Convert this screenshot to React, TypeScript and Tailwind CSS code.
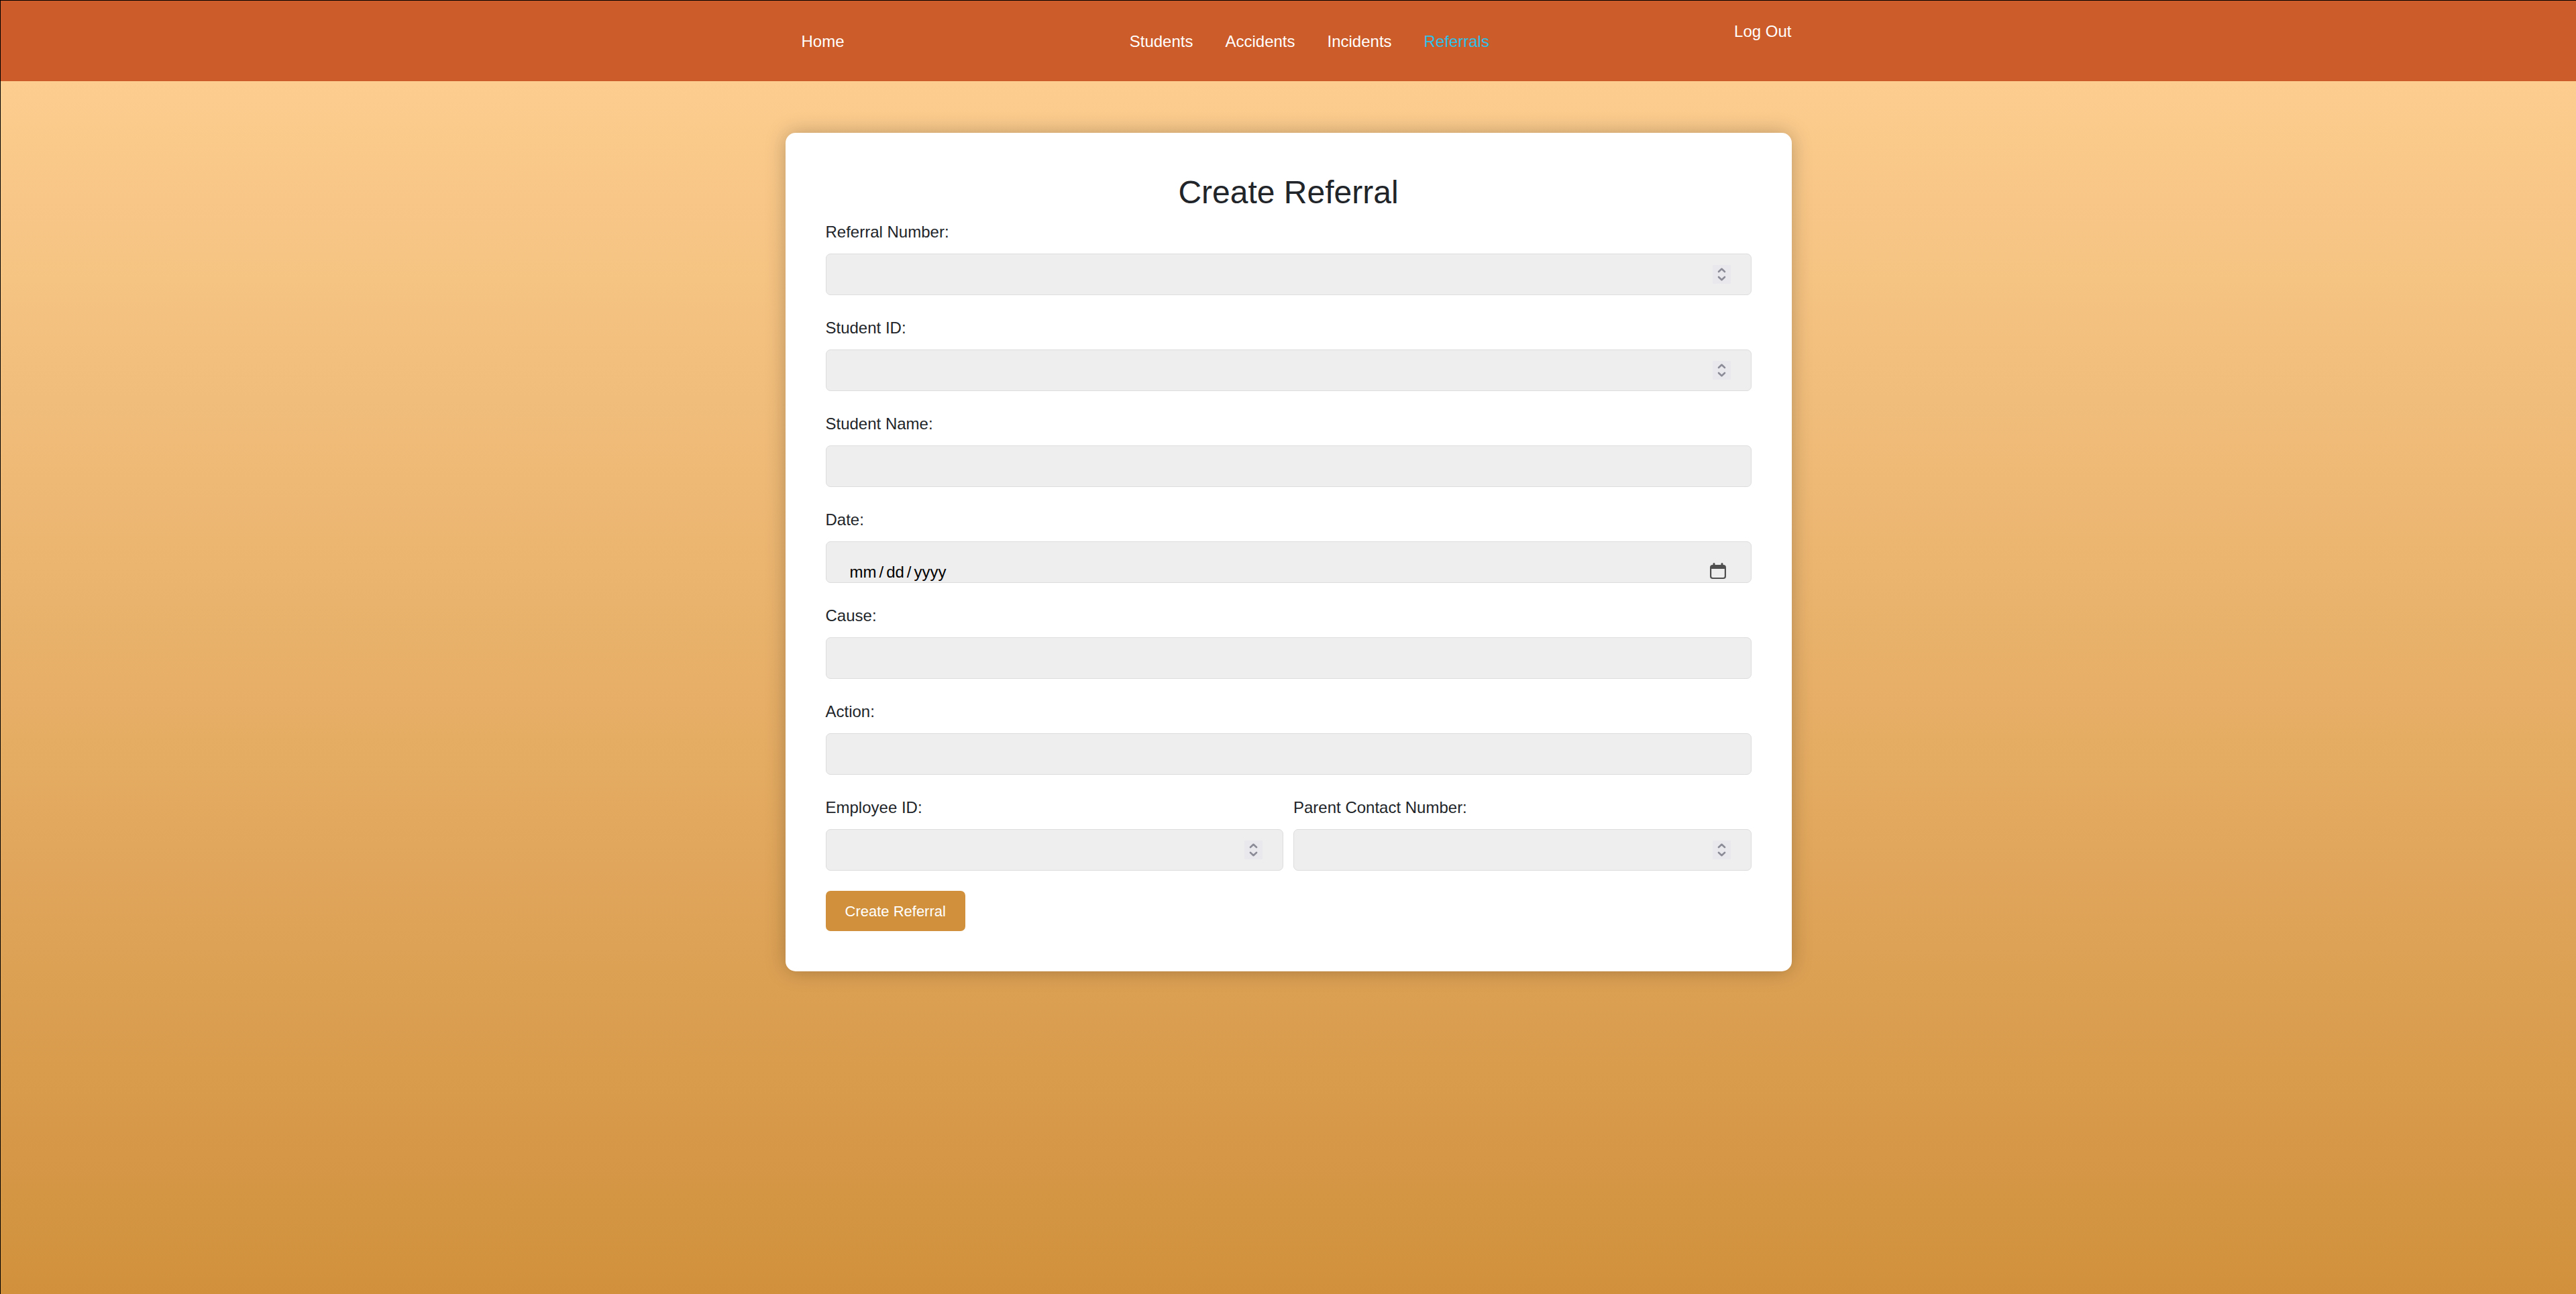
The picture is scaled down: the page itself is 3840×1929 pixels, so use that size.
import React from "react";

type FieldProps = {
  id: string;
  label: string;
  type?: "text" | "number" | "date";
};

function Stepper() {
  return (
    <span className="pointer-events-none absolute inset-y-0 right-[31px] flex items-center">
      <svg width="27" height="28" viewBox="0 0 27 28" aria-hidden="true">
        <rect width="27" height="28" fill="#e9e9ed" />
        <path
          d="M9 10 L13.5 5.8 L18 10 M9 18 L13.5 22.2 L18 18"
          fill="none"
          stroke="#8c8c99"
          strokeWidth="2.6"
          strokeLinecap="round"
          strokeLinejoin="round"
        />
      </svg>
    </span>
  );
}

function CalendarIcon() {
  return (
    <span className="pointer-events-none absolute inset-y-0 right-[38px] flex items-end pb-1.5">
      <svg width="24" height="24" viewBox="0 0 24 24" aria-hidden="true">
        <path
          fill="#4f4f50"
          fillRule="evenodd"
          d="M4.5 3V1.5a1.5 1.5 0 0 1 3 0V3h9V1.5a1.5 1.5 0 0 1 3 0V3H20a4 4 0 0 1 4 4v13a4 4 0 0 1-4 4H4a4 4 0 0 1-4-4V7a4 4 0 0 1 4-4zM2.2 9v11a2 2 0 0 0 2 2h15.6a2 2 0 0 0 2-2V9z"
        />
      </svg>
    </span>
  );
}

const inputBase =
  "block h-[62px] w-full rounded-[7px] border border-[#dddddd] bg-[#eeeeee] px-[34px] text-2xl text-black outline-none [appearance:textfield] [&::-webkit-inner-spin-button]:appearance-none";

const dateParts =
  "pt-[29px] [&::-webkit-datetime-edit-text]:px-[3px] [&::-webkit-datetime-edit-fields-wrapper]:p-0 [&::-webkit-calendar-picker-indicator]:opacity-0";

function Field({ id, label, type = "text" }: FieldProps) {
  return (
    <div className="min-w-0 flex-1">
      <label htmlFor={id} className="mb-3.5 block text-2xl leading-9">
        {label}
      </label>
      <div className="relative">
        <input
          id={id}
          name={id}
          type={type}
          className={type === "date" ? `${inputBase} ${dateParts}` : inputBase}
        />
        {type === "number" && <Stepper />}
        {type === "date" && <CalendarIcon />}
      </div>
    </div>
  );
}

const links = ["Students", "Accidents", "Incidents", "Referrals"];

export default function App() {
  return (
    <div className="min-h-screen border-t border-l border-black bg-linear-to-b from-[#ffd194] to-[#d1913c] font-['Liberation_Sans',Arial,sans-serif] text-[#212529]">
      <header className="bg-[#cc5c29] pt-7 pb-[26px]">
        <nav className="mx-auto flex max-w-[1500px] items-start justify-between text-2xl leading-9 text-white">
          <a href="#home" className="px-6 py-[15px]">
            Home
          </a>
          <ul className="flex gap-12 py-[15px] pr-6 pl-[60px]">
            {links.map((name) => (
              <li key={name}>
                <a
                  href={`#${name.toLowerCase()}`}
                  className={name === "Referrals" ? "text-[#2fc1ea]" : "text-white"}
                >
                  {name}
                </a>
              </li>
            ))}
          </ul>
          <a href="#logout">Log Out</a>
        </nav>
      </header>

      <main className="mx-auto mt-[77px] max-w-[1500px] rounded-[15px] bg-white p-[60px] shadow-[0_0_30px_rgba(0,0,0,0.25)]">
        <h1 className="mb-3 text-center text-5xl leading-[58px]">Create Referral</h1>
        <form onSubmit={(e: React.FormEvent) => e.preventDefault()}>
          <div className="flex flex-col gap-[31px]">
            <Field id="referral-number" label="Referral Number:" type="number" />
            <Field id="student-id" label="Student ID:" type="number" />
            <Field id="student-name" label="Student Name:" />
            <Field id="date" label="Date:" type="date" />
            <Field id="cause" label="Cause:" />
            <Field id="action" label="Action:" />
            <div className="flex gap-[15px]">
              <Field id="employee-id" label="Employee ID:" type="number" />
              <Field id="parent-contact" label="Parent Contact Number:" type="number" />
            </div>
          </div>
          <button
            type="submit"
            className="mt-[30px] h-[60px] rounded-[7px] bg-[#d1913c] px-[29px] text-[22px] text-white"
          >
            Create Referral
          </button>
        </form>
      </main>
    </div>
  );
}
